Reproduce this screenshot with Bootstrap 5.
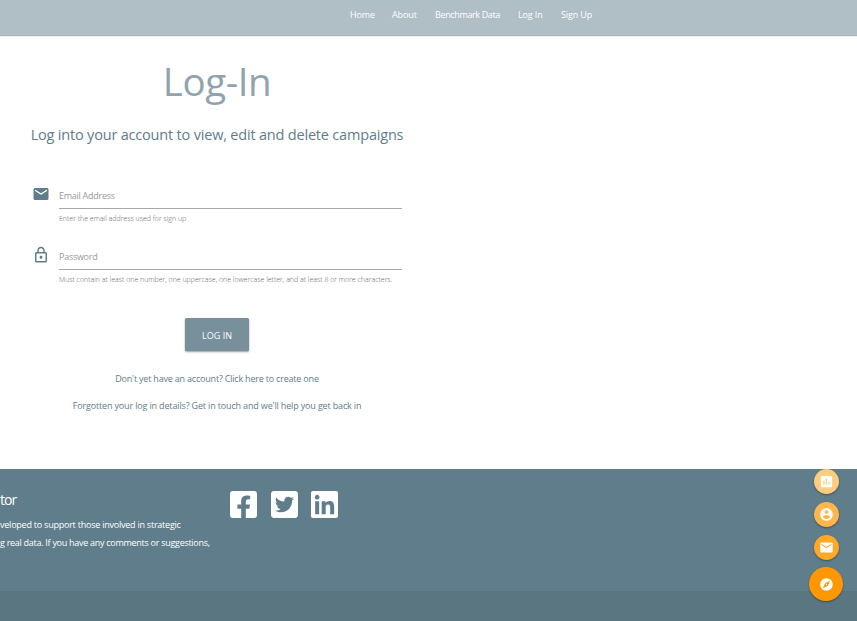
<!DOCTYPE html>
<html lang="en">
<head>
<meta charset="utf-8">
<meta name="viewport" content="width=device-width, initial-scale=1">
<title>Log-In</title>
<link href="https://cdn.jsdelivr.net/npm/bootstrap@5.3.0/dist/css/bootstrap.min.css" rel="stylesheet">
<style>
body{font-family:"Open Sans","Noto Sans",sans-serif;font-size:9px;color:#607d8b;height:621px;overflow:hidden;background:#fff}
.topbar{height:35px;background:#b0bec5;box-shadow:0 1px 1px rgba(0,0,0,.3);padding:0 0 5px 350px}
.topbar .nav-link{color:#fff;line-height:12px;white-space:nowrap;font-size:9px;letter-spacing:-.12px}
.topbar .bench{letter-spacing:-.36px}
.w-home{width:42px}.w-about{width:43px}.w-bench{width:83px}.w-login{width:43px}
.t{white-space:nowrap;display:block}
.login-area{width:434px;height:434px}
.page-title{font-size:38.5px;line-height:46px;color:#90a4ae;margin:23px 0 0;font-weight:400;letter-spacing:-.4px}
.page-sub{font-size:14.5px;line-height:20px;margin:21px 0 0;font-weight:400;letter-spacing:-.19px}
.login-form{margin-top:35px}
.field{margin-left:32px;height:61.3px}
.field-icon{width:18px;height:18px;margin-right:9px;margin-top:5px;fill:#607d8b}
.field-box{width:343px}
.field-input{height:29px;border:0;border-bottom:1px solid #a8a8a8;border-radius:0;padding:3px 0 0;font-size:9px;letter-spacing:-.27px;background:transparent;box-shadow:none!important}
.field-input::placeholder{color:#9a9a9a;opacity:1}
.help{font-size:7px;line-height:10px;color:#666;margin-top:5px;font-weight:300}
.btn-login{width:64px;height:33px;background:#78909c;color:#fff;border:0;border-radius:1.5px;font-size:9px;padding:3px 0 0;margin-top:15px;box-shadow:0 1px 2px rgba(0,0,0,.4)}
.btn-login:hover{background:#78909c;color:#fff}
.foot-link{color:#607d8b;line-height:14px}
.l1{margin-top:21px;letter-spacing:-.2px}
.l2{margin-top:13px;letter-spacing:-.155px}
.site-footer{height:152px;background:#607d8b;color:#fff}
.footer-main{height:122px;padding-top:21px}
.footer-copy{width:230px;height:90px}
.footer-title{font-size:14px;line-height:20px;margin:0;letter-spacing:-.9px}
.f1,.f2{line-height:18px}
.f1{margin-top:6px;letter-spacing:-.23px}
.f2{letter-spacing:-.28px}
.footer-strip{height:30px;background:#5a7680}
.socials{gap:13.5px;margin-top:1px}
.social{fill:#fff;width:27px;height:27px}
.fabs{right:14px;top:469px;width:34px}
.fab{border-radius:50%;width:25px;height:25px;box-shadow:0 1px 2px rgba(0,0,0,.35)}
.fab svg{width:15px;height:15px;fill:#fff}
.fab-lg{width:34px;height:34px;background:#ff9800;margin-top:7px}
.fab-a{background:#ffcc80}.fab-b{background:#ffb74d}.fab-c{background:#ffa726}
</style>
</head>
<body class="position-relative">
<nav class="topbar d-flex align-items-center">
  <div class="w-home"><a class="nav-link p-0" href="#">Home</a></div>
  <div class="w-about"><a class="nav-link p-0" href="#">About</a></div>
  <div class="w-bench"><a class="nav-link p-0 bench" href="#">Benchmark Data</a></div>
  <div class="w-login"><a class="nav-link p-0" href="#">Log In</a></div>
  <div><a class="nav-link p-0" href="#">Sign Up</a></div>
</nav>
<main class="login-area d-flex flex-column">
  <h1 class="page-title text-center">Log-In</h1>
  <h2 class="page-sub text-center text-nowrap">Log into your account to view, edit and delete campaigns</h2>
  <form class="login-form d-flex flex-column">
    <div class="field d-flex">
      <svg class="field-icon" viewBox="0 0 24 24"><path d="M20 4H4c-1.100 0-2 .9-2 2v12c0 1.100.9 2 2 2h16c1.100 0 2-.9 2-2V6c0-1.100-.9-2-2-2zm0 4l-8 5-8-5V6l8 5 8-5v2z"/></svg>
      <div class="field-box"><input class="form-control field-input" type="email" placeholder="Email Address"><span class="t help">Enter the email address used for sign up</span></div>
    </div>
    <div class="field d-flex">
      <svg class="field-icon" viewBox="0 0 24 24"><path d="M12 17c1.100 0 2-.9 2-2s-.9-2-2-2-2 .9-2 2 .9 2 2 2zm6-9h-1V6c0-2.760-2.240-5-5-5S7 3.240 7 6v2H6c-1.100 0-2 .9-2 2v10c0 1.100.9 2 2 2h12c1.100 0 2-.9 2-2V10c0-1.100-.9-2-2-2zM8.900 6c0-1.710 1.390-3.100 3.100-3.100s3.100 1.390 3.100 3.100v2H8.900V6zM18 20H6V10h12v10z"/></svg>
      <div class="field-box"><input class="form-control field-input" type="password" placeholder="Password"><span class="t help">Must contain at least one number, one uppercase, one lowercase letter, and at least 8 or more characters.</span></div>
    </div>
    <button class="btn btn-login mx-auto" type="button">LOG IN</button>
  </form>
  <a class="foot-link l1 t text-center text-decoration-none" href="#">Don't yet have an account? Click here to create one</a>
  <a class="foot-link l2 t text-center text-decoration-none" href="#">Forgotten your log in details? Get in touch and we'll help you get back in</a>
</main>
<footer class="site-footer">
  <div class="footer-main d-flex">
    <div class="footer-copy d-flex flex-column align-items-start">
      <h5 class="footer-title">tor</h5>
      <span class="t f1">veloped to support those involved in strategic</span>
      <span class="t f2">g real data. If you have any comments or suggestions,</span>
    </div>
    <div class="d-flex socials">
      <svg class="social" viewBox="0 32 448 448"><path d="M400 32H48A48 48 0 0 0 0 80v352a48 48 0 0 0 48 48h137.250V327.690h-63V256h63v-54.640c0-62.150 37-96.480 93.670-96.480 27.140 0 55.520 4.840 55.520 4.840v61h-31.270c-30.810 0-40.420 19.120-40.420 38.730V256h68.780l-11 71.690h-57.780V480H400a48 48 0 0 0 48-48V80a48 48 0 0 0-48-48z"/></svg>
      <svg class="social" viewBox="0 32 448 448"><path d="M400 32H48C21.500 32 0 53.500 0 80v352c0 26.500 21.500 48 48 48h352c26.500 0 48-21.500 48-48V80c0-26.500-21.500-48-48-48zm-48.900 158.800c.2 2.800.2 5.700.2 8.500 0 86.700-66 186.600-186.600 186.600-37.200 0-71.700-10.800-100.700-29.400 5.300.6 10.400.8 15.800.8 30.700 0 58.900-10.400 81.400-28-28.800-.6-53-19.500-61.300-45.500 10.100 1.500 19.200 1.500 29.600-1.200-30-6.100-52.500-32.500-52.500-64.400v-.8c8.700 4.900 18.900 7.900 29.600 8.300a65.447 65.447 0 0 1-29.200-54.600c0-12.200 3.200-23.400 8.900-33.100 32.300 39.800 80.800 65.800 135.200 68.600-9.300-44.500 24-80.600 64-80.600 18.900 0 35.900 7.900 47.900 20.700 14.800-2.800 29-8.300 41.600-15.800-4.900 15.200-15.200 28-28.800 36.100 13.200-1.400 26-5.100 37.800-10.200-8.900 13.100-20.100 24.700-32.900 34z"/></svg>
      <svg class="social" viewBox="0 32 448 448"><path d="M416 32H31.900C14.300 32 0 46.500 0 64.300v383.400C0 465.500 14.300 480 31.900 480H416c17.600 0 32-14.500 32-32.300V64.300c0-17.800-14.400-32.300-32-32.300zM135.400 416H69V202.200h66.500V416zm-33.200-243c-21.300 0-38.500-17.300-38.500-38.500S80.900 96 102.200 96c21.200 0 38.500 17.300 38.500 38.500 0 21.300-17.200 38.500-38.500 38.500zm282.100 243h-66.400V312c0-24.800-.5-56.700-34.500-56.700-34.600 0-39.900 27-39.900 54.900V416h-66.400V202.200h63.700v29.200h.9c8.900-16.800 30.600-34.500 62.900-34.500 67.200 0 79.700 44.300 79.700 101.900V416z"/></svg>
    </div>
  </div>
  <div class="footer-strip"></div>
</footer>
<div class="fabs position-absolute d-flex flex-column align-items-center">
  <a href="#" class="fab fab-a d-flex align-items-center justify-content-center"><svg viewBox="0 0 24 24"><path d="M19 3H5c-1.100 0-2 .9-2 2v14c0 1.100.9 2 2 2h14c1.100 0 2-.9 2-2V5c0-1.100-.9-2-2-2zM9 17H7v-7h2v7zm4 0h-2V7h2v10zm4 0h-2v-4h2v4z"/></svg></a>
  <a href="#" class="fab fab-b mt-2 d-flex align-items-center justify-content-center"><svg viewBox="0 0 24 24"><path d="M12 2C6.480 2 2 6.480 2 12s4.480 10 10 10 10-4.480 10-10S17.520 2 12 2zm0 3c1.660 0 3 1.340 3 3s-1.340 3-3 3-3-1.340-3-3 1.340-3 3-3zm0 14.200c-2.500 0-4.710-1.280-6-3.220.03-1.990 4-3.080 6-3.080 1.990 0 5.970 1.090 6 3.080-1.290 1.940-3.500 3.220-6 3.220z"/></svg></a>
  <a href="#" class="fab fab-c mt-2 d-flex align-items-center justify-content-center"><svg viewBox="0 0 24 24"><path d="M20 4H4c-1.100 0-2 .9-2 2v12c0 1.100.9 2 2 2h16c1.100 0 2-.9 2-2V6c0-1.100-.9-2-2-2zm0 4l-8 5-8-5V6l8 5 8-5v2z"/></svg></a>
  <a href="#" class="fab fab-lg d-flex align-items-center justify-content-center"><svg viewBox="0 0 24 24"><path d="M12 10.900c-.61 0-1.100.49-1.100 1.100s.49 1.100 1.100 1.100c.61 0 1.100-.49 1.100-1.100s-.49-1.100-1.100-1.100zM12 2C6.480 2 2 6.480 2 12s4.480 10 10 10 10-4.480 10-10S17.520 2 12 2zm2.190 12.190L6 18l3.810-8.190L18 6l-3.810 8.190z"/></svg></a>
</div>
<script src="https://cdn.jsdelivr.net/npm/bootstrap@5.3.0/dist/js/bootstrap.bundle.min.js"></script>
</body>
</html>
